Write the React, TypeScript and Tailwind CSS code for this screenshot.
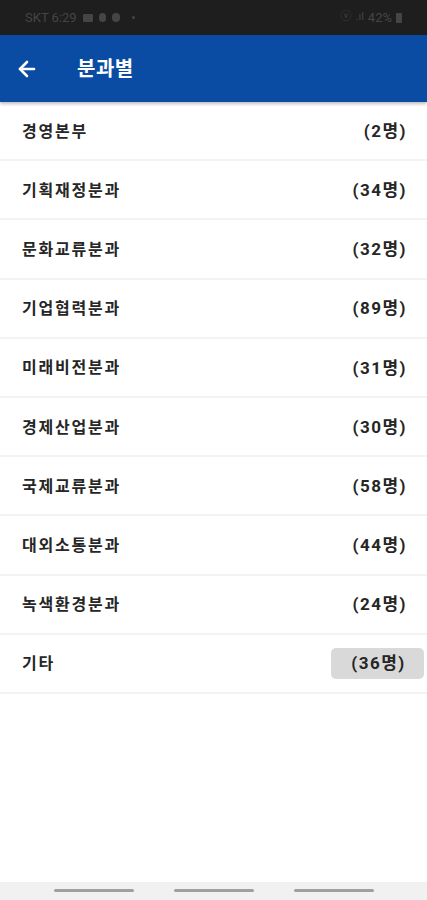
import React from "react";
import { ArrowLeft } from "lucide-react";

const rows = [
  { name: "경영본부", count: 2 },
  { name: "기획재정분과", count: 34 },
  { name: "문화교류분과", count: 32 },
  { name: "기업협력분과", count: 89 },
  { name: "미래비전분과", count: 31 },
  { name: "경제산업분과", count: 30 },
  { name: "국제교류분과", count: 58 },
  { name: "대외소통분과", count: 44 },
  { name: "녹색환경분과", count: 24 },
  { name: "기타", count: 36, active: true },
];

export default function App() {
  return (
    <div
      className="w-[427px] h-[900px] flex flex-col bg-white overflow-hidden"
      style={{ fontFamily: "Roboto, 'Noto Sans CJK KR', sans-serif" }}
    >
      {/* status bar */}
      <div className="h-[35px] bg-[#1e1e1e] flex items-center justify-between px-[25px] text-[13px] text-[#454545]">
        <div className="flex items-center gap-[6px]">
          <span>SKT 6:29</span>
          <span className="w-[10px] h-[8px] bg-[#454545] rounded-[1px]" />
          <span className="w-[7px] h-[9px] bg-[#454545] rounded-full" />
          <span className="w-[8px] h-[9px] bg-[#454545] rounded-full" />
          <span className="w-[3px] h-[3px] bg-[#454545] rounded-full ml-[6px]" />
        </div>
        <div className="flex items-center gap-[4px]">
          <span className="text-[11px]">ⓥ</span>
          <span className="text-[11px]">.ıl</span>
          <span>42%</span>
          <span className="w-[6px] h-[10px] bg-[#454545] rounded-[1px]" />
        </div>
      </div>

      {/* header */}
      <div className="h-[67px] bg-[#0a4ba3] flex items-center pl-[15px] shadow-[0_2px_3px_rgba(0,0,0,0.25)] relative">
        <ArrowLeft className="w-[24px] h-[24px] text-white" strokeWidth={2.6} />
        <span className="ml-[38px] text-white text-[20px] font-bold tracking-[0.5px]">분과별</span>
      </div>

      {/* list */}
      <div className="flex flex-col">
        {rows.map((r) => (
          <div
            key={r.name}
            className="h-[59.2px] flex items-center justify-between pl-[22px] pr-[20px] border-b-[2px] border-[#f3f3f3]"
          >
            <span className="pt-[2px] text-[16px] font-semibold text-[#262626] tracking-[1.8px]">{r.name}</span>
            {r.active ? (
              <span className="mr-[-17px] w-[93px] h-[31px] rounded-[5px] bg-[#d9d9d9] flex items-center justify-center pl-[2px] text-[17px] font-bold text-[#262626] tracking-[1.5px]">
                ({r.count}명)
              </span>
            ) : (
              <span className="pt-[2px] text-[17px] font-bold text-[#262626] tracking-[1.5px]">({r.count}명)</span>
            )}
          </div>
        ))}
      </div>

      <div className="flex-1" />

      {/* nav bar */}
      <div className="h-[18px] bg-[#f1f1f1] flex items-center justify-center gap-[40px] pb-[1px]">
        <span className="w-[80px] h-[3px] rounded-full bg-[#a0a0a0]" />
        <span className="w-[80px] h-[3px] rounded-full bg-[#a0a0a0]" />
        <span className="w-[80px] h-[3px] rounded-full bg-[#a0a0a0]" />
      </div>
    </div>
  );
}
